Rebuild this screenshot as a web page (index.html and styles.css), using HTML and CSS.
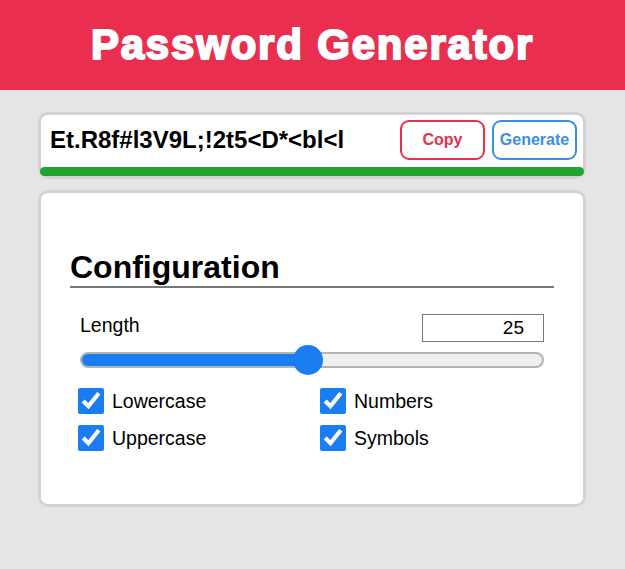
FILE: index.html
```html
<!DOCTYPE html>
<html lang="en">
<head>
<meta charset="utf-8">
<title>Password Generator</title>
<link rel="stylesheet" href="styles.css">
</head>
<body>
<header class="app-header">
  <h1 class="app-title">Password Generator</h1>
</header>
<main class="container">
  <section class="card output-card">
    <div class="output-row">
      <span class="password">Et.R8f#l3V9L;!2t5&lt;D*&lt;bl&lt;l</span>
      <div class="actions">
        <button class="btn btn-copy" type="button">Copy</button>
        <button class="btn btn-generate" type="button">Generate</button>
      </div>
    </div>
    <div class="strength-bar"></div>
  </section>
  <section class="card config-card">
    <h2 class="config-title">Configuration</h2>
    <div class="length-row">
      <label class="length-label" for="len">Length</label>
      <input class="length-input" id="len" type="number" value="25" min="1" max="50">
    </div>
    <div class="slider-wrap">
      <input class="slider" type="range" min="1" max="50" value="25" style="--fill: 49%">
    </div>
    <div class="options">
      <label class="option"><input type="checkbox" checked><span>Lowercase</span></label>
      <label class="option"><input type="checkbox" checked><span>Numbers</span></label>
      <label class="option"><input type="checkbox" checked><span>Uppercase</span></label>
      <label class="option"><input type="checkbox" checked><span>Symbols</span></label>
    </div>
  </section>
</main>
</body>
</html>
```

FILE: styles.css
```css
* { box-sizing: border-box; }
html, body { margin: 0; padding: 0; }
body {
  background: #e5e5e5;
  font-family: "Liberation Sans", Arial, sans-serif;
  color: #000;
  height: 569px;
}
.app-header {
  background: #e92e4f;
  height: 90px;
  display: flex;
  align-items: center;
  justify-content: center;
}
.app-title {
  margin: 0;
  color: #fff;
  font-size: 42px;
  font-weight: 700;
  letter-spacing: 1.8px;
  -webkit-text-stroke: 2px #fff;
  line-height: 1;
}
.container {
  margin: 22px 39px 0 38px;
  display: flex;
  flex-direction: column;
  gap: 11px;
}
.card {
  background: #fff;
  border: 3px solid #d3d3d3;
  border-radius: 10px;
}
.output-card {
  display: flex;
  flex-direction: column;
}
.output-row {
  display: flex;
  align-items: center;
  justify-content: space-between;
  padding: 5px 6px 0 9px;
}
.password {
  font-size: 24px;
  font-weight: 700;
}
.actions {
  display: flex;
  gap: 7px;
}
.btn {
  width: 85px;
  height: 40px;
  background: #fff;
  border: 2px solid;
  border-radius: 9px;
  font-family: "Liberation Sans", Arial, sans-serif;
  font-size: 16px;
  font-weight: 700;
  padding: 0;
}
.btn-copy { color: #e8304c; border-color: #e8304c; }
.btn-generate { color: #3a8ee6; border-color: #3a8ee6; }
.strength-bar {
  height: 9px;
  margin: 7px -1px 0;
  background: #22a22f;
  border-radius: 5px;
}
.config-card {
  padding: 30px 29px 53px;
}
.config-title {
  margin: 26px 0 0;
  font-size: 32px;
  line-height: 37px;
  font-weight: 700;
  border-bottom: 2px solid #777;
}
.length-row {
  display: flex;
  justify-content: space-between;
  align-items: flex-start;
  margin-top: 26px;
  padding: 0 10px;
}
.length-label {
  font-size: 19.5px;
  line-height: 22px;
}
.length-input {
  width: 122px;
  height: 28px;
  border: 1px solid #767676;
  font-family: "Liberation Sans", Arial, sans-serif;
  font-size: 19px;
  text-align: right;
  padding: 0 19px 0 4px;
  -moz-appearance: textfield;
}
.length-input::-webkit-outer-spin-button,
.length-input::-webkit-inner-spin-button { -webkit-appearance: none; margin: 0; }
.slider-wrap {
  padding: 0 10px;
  margin-top: 10px;
}
.slider {
  -webkit-appearance: none;
  appearance: none;
  display: block;
  width: 100%;
  height: 16px;
  margin: 0;
  border: 2px solid #b4b4b4;
  border-radius: 8px;
  background: linear-gradient(to right, #1a7ef2 var(--fill), #efefef var(--fill));
  background-origin: border-box;
}
.slider::-webkit-slider-runnable-track { height: 12px; }
.slider::-webkit-slider-thumb {
  -webkit-appearance: none;
  appearance: none;
  width: 30px;
  height: 30px;
  border-radius: 50%;
  background: #1a7ef2;
  margin-top: -9px;
  border: none;
}
.options {
  display: grid;
  grid-template-columns: 1fr 1fr;
  row-gap: 11px;
  margin-top: 20px;
}
.option {
  display: flex;
  align-items: center;
  gap: 8px;
  padding-left: 8px;
  font-size: 19.5px;
}
.option input {
  width: 26px;
  height: 26px;
  margin: 0;
  accent-color: #1a7ef2;
}
```
